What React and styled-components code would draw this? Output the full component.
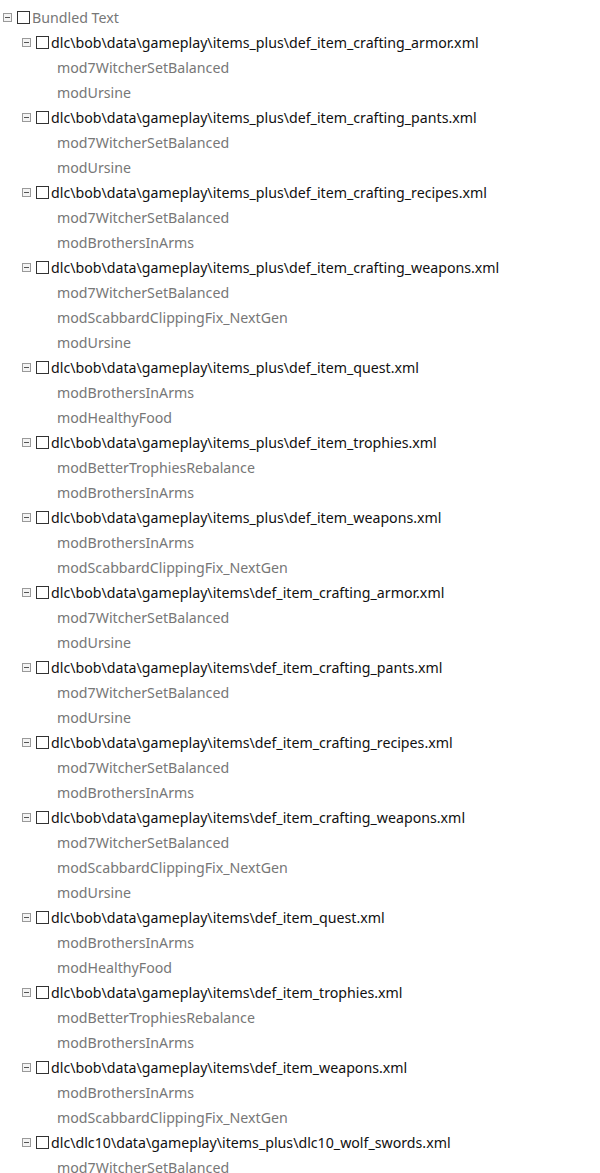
import React from "react"
import styled, { createGlobalStyle } from "styled-components"

const Global = createGlobalStyle`
  html, body {
    margin: 0;
    padding: 0;
    background: #ffffff;
  }
  body {
    font-family: "Noto Sans", "Open Sans", sans-serif;
    overflow: hidden;
  }
`

const Tree = styled.div`
  width: 600px;
  height: 1173px;
  overflow: hidden;
  padding-top: 5px;
  box-sizing: border-box;
`

const Row = styled.div`
  height: 25px;
  display: flex;
  align-items: center;
  padding-left: ${p => p.indent}px;
  white-space: nowrap;
`

const Expander = styled.span`
  width: 9px;
  height: 9px;
  box-sizing: border-box;
  border: 1px solid #9a9a9a;
  background: #f4f4f4;
  position: relative;
  flex: none;
  &::after {
    content: "";
    position: absolute;
    left: 1px;
    right: 1px;
    top: 3px;
    height: 1px;
    background: #555;
  }
`

const Check = styled.span`
  width: 13px;
  height: 13px;
  box-sizing: border-box;
  border: 1px solid #333;
  background: #fff;
  margin-left: 5px;
  margin-right: 2px;
  flex: none;
`

const Label = styled.span`
  font-size: 14.2px;
  color: ${p => p.muted ? "#777777" : "#111111"};
  line-height: 25px;
`

const dirs = [
  "dlc\\bob\\data\\gameplay\\items_plus\\",
  "dlc\\bob\\data\\gameplay\\items\\",
]

const files = [
  ["def_item_crafting_armor.xml", ["mod7WitcherSetBalanced", "modUrsine"]],
  ["def_item_crafting_pants.xml", ["mod7WitcherSetBalanced", "modUrsine"]],
  ["def_item_crafting_recipes.xml", ["mod7WitcherSetBalanced", "modBrothersInArms"]],
  ["def_item_crafting_weapons.xml", ["mod7WitcherSetBalanced", "modScabbardClippingFix_NextGen", "modUrsine"]],
  ["def_item_quest.xml", ["modBrothersInArms", "modHealthyFood"]],
  ["def_item_trophies.xml", ["modBetterTrophiesRebalance", "modBrothersInArms"]],
  ["def_item_weapons.xml", ["modBrothersInArms", "modScabbardClippingFix_NextGen"]],
]

const groups = [
  ...dirs.flatMap(d => files.map(([f, mods]) => ({ path: d + f, mods }))),
  { path: "dlc\\dlc10\\data\\gameplay\\items_plus\\dlc10_wolf_swords.xml", mods: ["mod7WitcherSetBalanced"] },
]

const App = () => {
  return (
    <>
      <Global />
      <Tree>
        <Row indent={3}>
          <Expander />
          <Check />
          <Label muted>Bundled Text</Label>
        </Row>
        {groups.map(g => (
          <React.Fragment key={g.path}>
            <Row indent={22}>
              <Expander />
              <Check />
              <Label>{g.path}</Label>
            </Row>
            {g.mods.map(m => (
              <Row indent={57} key={m}>
                <Label muted>{m}</Label>
              </Row>
            ))}
          </React.Fragment>
        ))}
      </Tree>
    </>
  )
}

export default App
